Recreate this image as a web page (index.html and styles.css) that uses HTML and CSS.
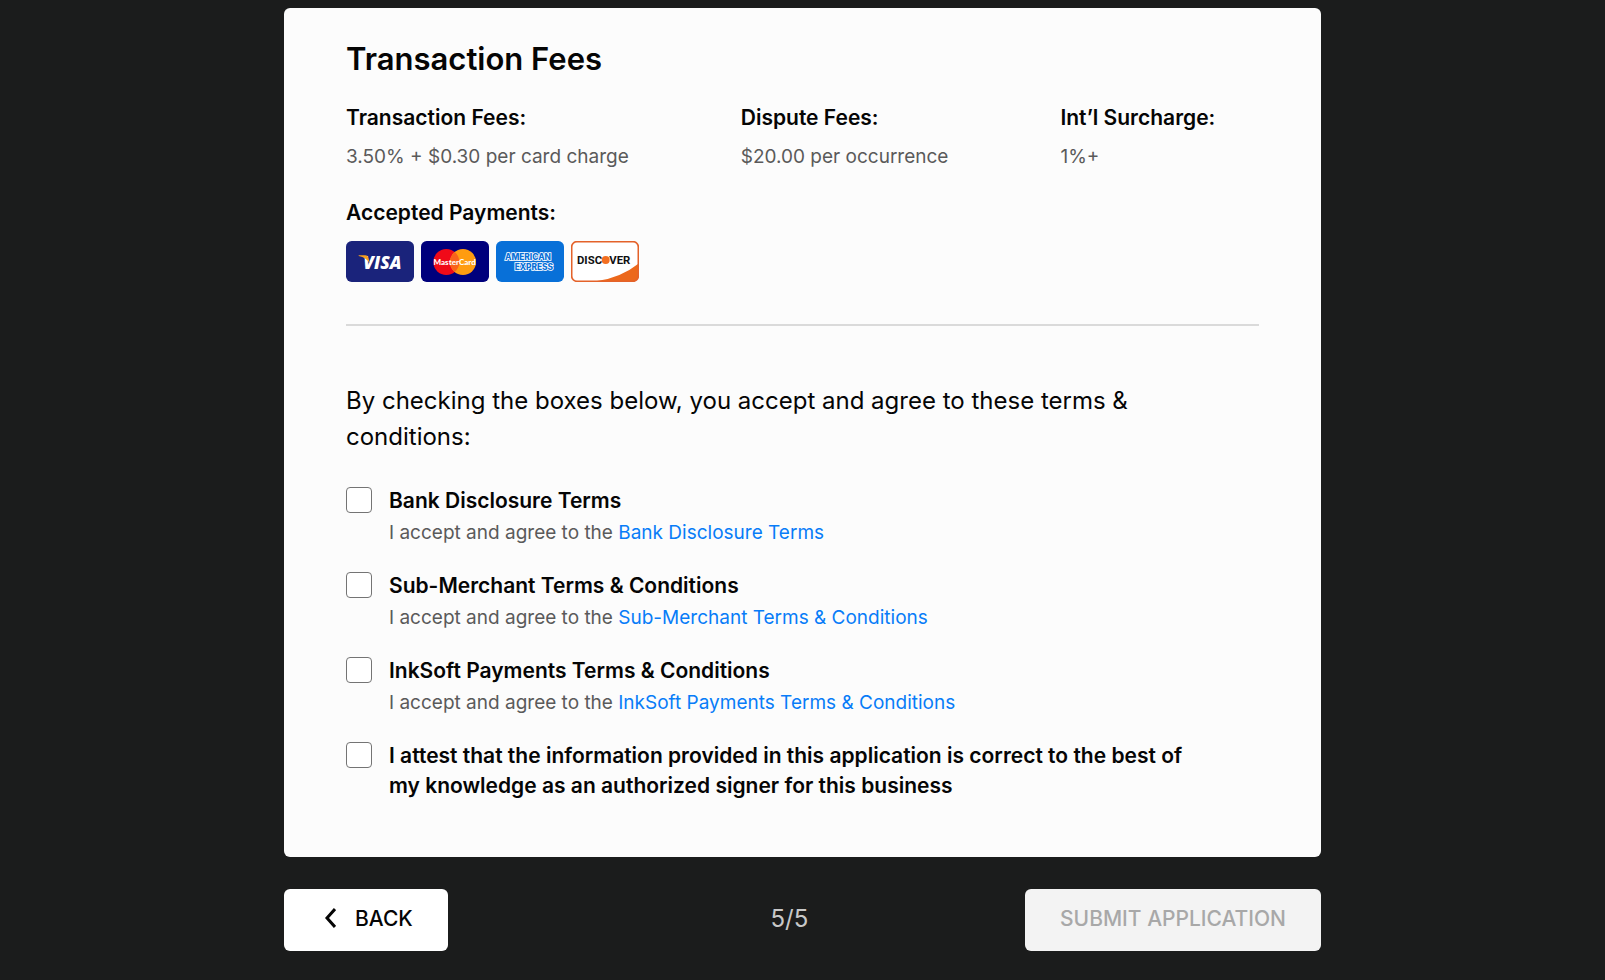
FILE: index.html
```html
<!DOCTYPE html>
<html lang="en">
    <head>
        <meta charset="utf-8" />
        <meta name="viewport" content="width=device-width, initial-scale=1" />
        <title>Transaction Fees</title>
        <link rel="stylesheet" href="styles.css">
    </head>

    <body>
        <form class="page">
            <main class="card">
                <h1 class="title">Transaction Fees</h1>

                <dl class="fees">
                    <div>
                        <dt class="label">Transaction Fees:</dt>
                        <dd class="value">3.50% + $0.30 per card charge</dd>
                    </div>
                    <div>
                        <dt class="label">Dispute Fees:</dt>
                        <dd class="value">$20.00 per occurrence</dd>
                    </div>
                    <div>
                        <dt class="label">Int’l Surcharge:</dt>
                        <dd class="value">1%+</dd>
                    </div>
                </dl>

                <h2 class="label">Accepted Payments:</h2>
                <ul class="payments">
                    <li>
                        <svg class="logo" viewBox="0 0 204 123" role="img" aria-label="Visa">
                            <rect width="204" height="123" rx="17" fill="#1a237b" />
                            <text class="visa" x="52" y="83">VISA</text>
                            <path d="M38 43h20q7 0 9 7l5 18Q62 50 38 45z" fill="#f7a01d" />
                        </svg>
                    </li>
                    <li>
                        <svg class="logo" viewBox="0 0 204 123" role="img" aria-label="MasterCard">
                            <rect width="204" height="123" rx="17" fill="#00007c" />
                            <circle cx="76" cy="63" r="39" fill="#f00a18" />
                            <circle cx="126" cy="63" r="39" fill="#ff9c10" />
                            <path d="M101 33a39 39 0 0 1 0 60a39 39 0 0 1 0-60z" fill="#f9621b" />
                            <text class="mastercard" x="101" y="72">MasterCard</text>
                        </svg>
                    </li>
                    <li>
                        <svg class="logo" viewBox="0 0 204 123" role="img" aria-label="American Express">
                            <rect width="204" height="123" rx="17" fill="#0870d8" />
                            <text class="amex" x="27" y="57">AMERICAN</text>
                            <text class="amex" x="56" y="87">EXPRESS</text>
                        </svg>
                    </li>
                    <li>
                        <svg class="logo" viewBox="0 0 204 123" role="img" aria-label="Discover">
                            <rect x="2" y="2" width="200" height="119" rx="16" fill="#fff" />
                            <path d="M202 68v37q0 16-16 16H74Q150 110 202 68z" fill="#ec681c" />
                            <rect class="discover-frame" x="2" y="2" width="200" height="119" rx="16" />
                            <text class="discover" x="18" y="69">DISC</text>
                            <circle cx="104" cy="57" r="12" fill="#f36f21" />
                            <text class="discover" x="115" y="69">VER</text>
                        </svg>
                    </li>
                </ul>

                <hr class="divider" />

                <p class="intro">By checking the boxes below, you accept and agree to these terms &amp; conditions:</p>

                <ul class="terms">
                    <li class="term">
                        <input class="checkbox" type="checkbox" id="bank" />
                        <div>
                            <label class="label" for="bank">Bank Disclosure Terms</label>
                            <p class="value">I accept and agree to the <a href="#bank-terms">Bank Disclosure Terms</a></p>
                        </div>
                    </li>
                    <li class="term">
                        <input class="checkbox" type="checkbox" id="merchant" />
                        <div>
                            <label class="label" for="merchant">Sub-Merchant Terms &amp; Conditions</label>
                            <p class="value">I accept and agree to the <a href="#merchant-terms">Sub-Merchant Terms &amp; Conditions</a></p>
                        </div>
                    </li>
                    <li class="term">
                        <input class="checkbox" type="checkbox" id="inksoft" />
                        <div>
                            <label class="label" for="inksoft">InkSoft Payments Terms &amp; Conditions</label>
                            <p class="value">I accept and agree to the <a href="#inksoft-terms">InkSoft Payments Terms &amp; Conditions</a></p>
                        </div>
                    </li>
                    <li class="term">
                        <input class="checkbox" type="checkbox" id="attest" />
                        <label class="label" for="attest">I attest that the information provided in this application is correct to the best of my knowledge as an authorized signer for this business</label>
                    </li>
                </ul>
            </main>

            <footer class="actions">
                <button class="button back" type="button">
                    <svg class="chevron" viewBox="0 0 12 20" aria-hidden="true">
                        <path d="M11 1L3 10l8 9" />
                    </svg>
                    BACK
                </button>
                <span class="step">5/5</span>
                <button class="button submit" type="submit" disabled>SUBMIT APPLICATION</button>
            </footer>
        </form>
    </body>
</html>
```
FILE: styles.css
```css
* {
    box-sizing: border-box;
}

body {
    margin: 0;
    padding: 8px 24px 30px;
    background: #1b1c1c;
    color: #050505;
    font-family: Inter, "Liberation Sans", sans-serif;
}

h1, h2, p, ul, dl, dd {
    margin: 0;
    padding: 0;
}

ul {
    list-style: none;
}

.page {
    max-width: 1037px;
    margin: 0 auto;
}

.card {
    padding: 30px 62px 56px;
    background: #fcfcfc;
    border-radius: 6px;
}

.title {
    margin-bottom: 23px;
    font-size: 31px;
    font-weight: 600;
    line-height: 42px;
}

.label {
    display: block;
    font-size: 21px;
    font-weight: 600;
    line-height: 30px;
}

.value {
    margin-top: 2px;
    color: #5a5a5a;
    font-size: 19px;
    line-height: 30px;
}

.value a {
    color: #087cf8;
    text-decoration: none;
}

.fees {
    display: flex;
    flex-wrap: wrap;
    gap: 24px 112px;
    margin-bottom: 26px;
}

.fees .value {
    margin-top: 9px;
}

.payments {
    display: flex;
    gap: 7px;
    margin-top: 13px;
}

.logo {
    display: block;
    width: 68px;
    height: 41px;
}

.visa {
    fill: #fff;
    font: italic 800 52px "Open Sans", sans-serif;
}

.mastercard {
    fill: #fff;
    font: 900 24px Lato, sans-serif;
    text-anchor: middle;
}

.amex {
    fill: #0870d8;
    stroke: #fff;
    stroke-width: 5px;
    paint-order: stroke;
    font: 800 25px Inter, sans-serif;
}

.discover {
    fill: #111;
    font: 700 34px Roboto, sans-serif;
}

.discover-frame {
    fill: none;
    stroke: #e4622a;
    stroke-width: 5px;
}

.divider {
    margin: 42px 0 57px;
    border: 0;
    border-top: 2px solid #dadada;
}

.intro {
    margin-bottom: 31px;
    font-size: 24px;
    line-height: 36px;
}

.terms {
    display: grid;
    gap: 23px;
    padding-right: 48px;
}

.term {
    display: flex;
    align-items: flex-start;
    gap: 17px;
}

.checkbox {
    flex: none;
    width: 26px;
    height: 26px;
    margin: 1px 0 0;
    appearance: none;
    background: #fff;
    border: 1px solid #747474;
    border-radius: 4px;
}

.checkbox:checked {
    background: #087cf8;
    border-color: #087cf8;
}

.actions {
    display: grid;
    grid-template-columns: auto 1fr auto;
    align-items: center;
    margin-top: 32px;
}

.button {
    display: flex;
    align-items: center;
    height: 62px;
    padding: 0 35px 4px;
    border: 0;
    border-radius: 6px;
    background: #fff;
    color: #050505;
    font-family: inherit;
    font-size: 21px;
    font-weight: 500;
    cursor: pointer;
}

.back {
    gap: 19px;
    padding-left: 40px;
}

.chevron {
    width: 12px;
    height: 20px;
    fill: none;
    stroke: #050505;
    stroke-width: 3px;
}

.step {
    padding: 0 0 4px 106px;
    text-align: center;
    color: #c8c8c8;
    font-size: 24px;
}

.submit {
    background: #f3f3f3;
    color: #a8a8a8;
    cursor: default;
}
```
